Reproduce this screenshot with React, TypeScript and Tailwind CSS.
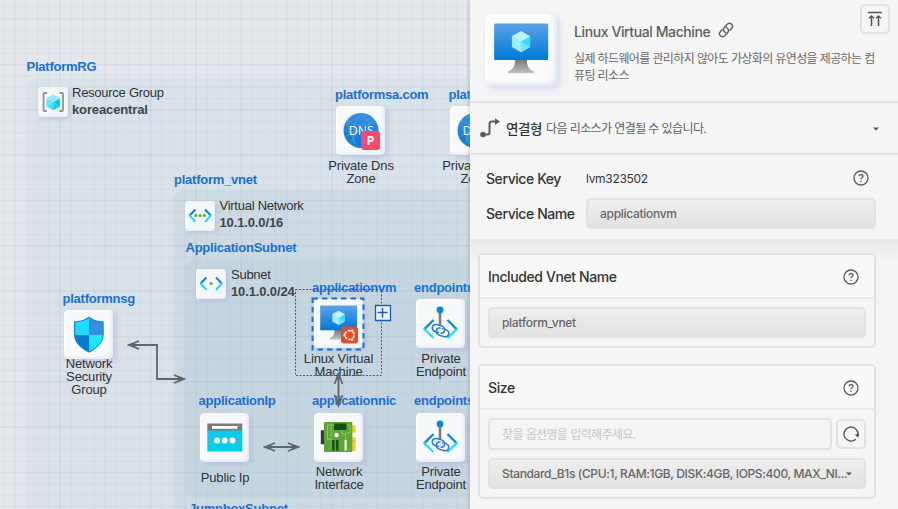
import type { ReactNode } from 'react';

const gridX = Array.from({ length: 43 }, (_, i) => 3.4 + i * 11.33);
const gridY = Array.from({ length: 46 }, (_, i) => -3.4 + i * 11.33);

function Grid() {
  return (
    <svg className="absolute inset-0" width="470" height="509" stroke="#7f93aa">
      {gridX.map((x, i) => (
        <path key={`x${i}`} d={`M${x} 0V509`} strokeWidth={i % 4 === 1 ? 1.6 : 1.3} opacity={i % 4 === 1 ? 0.1 : 0.055} />
      ))}
      {gridY.map((y, i) => (
        <path key={`y${i}`} d={`M0 ${y}H470`} strokeWidth={i % 4 === 2 ? 1.6 : 1.3} opacity={i % 4 === 2 ? 0.1 : 0.055} />
      ))}
    </svg>
  );
}

function DnsIcon() {
  return (
    <svg width="49" height="49" viewBox="0 0 49 49">
      <defs><linearGradient id="dns" x2="0" y2="1"><stop stopColor="#3b8fdf" /><stop offset="1" stopColor="#0877d1" /></linearGradient></defs>
      <circle cx="25" cy="24.5" r="17.5" fill="url(#dns)" />
      <g fill="none" stroke="#61adf0" strokeWidth=".8" opacity=".6">
        <path d="M11 14Q26 25 40 14M9 31Q24 19 41 31M25 7Q13 20 19 41M27 7Q40 23 29 41M11 14Q14 32 23 41M36 11Q24 16 15 38" />
      </g>
      <text x="12.8" y="29" fontSize="12.3" fill="white" className="font-['Open_Sans',sans-serif]">DNS</text>
      <rect x="25" y="25" width="19" height="19" rx="3" fill="#ff476b" />
      <text x="30.3" y="39" fontSize="13" fontWeight="700" fill="white" className="font-['Open_Sans',sans-serif]">P</text>
    </svg>
  );
}

function MonitorIcon({ size = 49, ubuntu = false }: { size?: number; ubuntu?: boolean }) {
  return (
    <svg width={size} height={size} viewBox="0 0 49 49">
      <defs>
        <linearGradient id="screen" x2="0" y2="1"><stop stopColor="#5ba1ec" /><stop offset="1" stopColor="#0079d5" /></linearGradient>
        <linearGradient id="stand" x2="0" y2="1"><stop stopColor="#777" /><stop offset="1" stopColor="#c2c2c2" /></linearGradient>
      </defs>
      <path d="M20.5 31h8c.1 5 1.5 7 4.8 8v1.4H15.7V39c3.3-1 4.7-3 4.8-8z" fill="url(#stand)" />
      <rect x="6.2" y="6.5" width="36.8" height="24.8" rx=".8" fill="url(#screen)" />
      <path d="M24.5 11.7l6.2 3.5v7.3l-6.2 3.5-6.2-3.5v-7.3z" fill="#9cedff" />
      <path d="M24.5 18.8l6.2-3.6v7.3z" fill="#31dcff" /><path d="M24.5 18.8v7.2l6.2-3.5z" fill="#6ae6ff" />
      <path d="M18.3 15.2l6.2-3.5 6.2 3.5-6.2 3.6z" fill="#bbf4ff" />
      {ubuntu && <g>
        <rect x="27" y="27.5" width="17" height="17" rx="3" fill="#e94b25" />
        <circle cx="35.5" cy="36" r="4.5" fill="none" stroke="white" strokeWidth="1.7" strokeDasharray="8 1.42" />
        <g fill="white" stroke="#e94b25" strokeWidth=".5"><circle cx="30.5" cy="36" r="1.5" /><circle cx="38" cy="31.5" r="1.5" /><circle cx="38" cy="40.5" r="1.5" /></g>
      </g>}
    </svg>
  );
}

function EndpointIcon() {
  return (
    <svg width="49" height="49" viewBox="0 0 49 49" fill="none">
      <path d="M24 13v13.5" stroke="#7b7b7b" strokeWidth="2.5" /><circle cx="24" cy="11" r="3.4" fill="#0c86d8" />
      <g strokeWidth="2.3"><path d="M17.5 21L8 30.6M31.5 21L41 30.6" stroke="#198ad7" /><path d="M8 29.8l9.5 9.2M41 29.8l-9.5 9.2" stroke="#24dffa" /></g>
      <g stroke="#277fd1" strokeWidth="1.5" strokeLinecap="round"><path d="M22.6 33.6l-3.1-.8c-5.2-2-3.7-8 1.2-7.3l4.7 1.4c5.2 2 3.7 7.6-.4 7.2" /><path d="M26.5 29.6l3 .8c5.2 2 3.6 8-1.2 7.3l-4.7-1.4c-5.2-2-3.7-7.6.4-7.2" /></g>
    </svg>
  );
}

function ShieldIcon() {
  return (
    <svg width="49" height="49" viewBox="0 0 49 49">
      <path d="M25 6.5c5 3.7 9 4.8 14.7 4.8v13.2c0 8-6 13.3-14.7 18.3-8.7-5-15-10.3-15-18.3V11.3C16 11.3 20 10.2 25 6.5z" fill="#1684d8" />
      <path d="M25 7.8V25H11.2V12.4c5.5-.1 9-1.2 13.8-4.6z" fill="#1dddf6" /><path d="M25 7.8V25h13.6V12.4C33.3 12.3 30 11.2 25 7.8z" fill="#388fdf" />
      <path d="M25 25h13.6c0 7.3-5.3 11.8-13.6 16.5z" fill="#22e5ff" /><path d="M25 25H11.2c0 7.3 5.5 11.8 13.8 16.5z" fill="#087dcd" />
    </svg>
  );
}

function PublicIpIcon() {
  return (
    <svg width="49" height="49" viewBox="0 0 49 49">
      <path d="M7.3 16.5h35v22h-35z" fill="#0acbed" /><path d="M7.3 10.5h35v7h-35z" fill="#7b7b7b" /><path d="M12 13h25.5v2.8H12z" fill="#fff" />
      <g fill="#f7feff"><circle cx="17" cy="27.5" r="3" /><circle cx="24.7" cy="27.5" r="3" /><circle cx="32.5" cy="27.5" r="3" /></g>
    </svg>
  );
}

function NicIcon() {
  return (
    <svg width="49" height="49" viewBox="0 0 49 49">
      <rect x="6.8" y="17.3" width="5" height="14" rx=".6" fill="#343a3e" /><path d="M37 12.2h4.5v7.5H37zM37 24.2h4.5V38H37z" fill="#fdc530" />
      <path d="M37 28h4.5" stroke="#e9a726" /><rect x="10" y="9" width="28.3" height="30" rx="1" fill="#5ba436" />
      <g fill="none" stroke="#8fca50" strokeWidth="1"><path d="M20 12h-6.5v14H18v10M17 14v10M28 16v5h3.5v13M33 12h3v8h-4" /></g>
      <rect x="20" y="10.5" width="12.5" height="6.5" fill="#174f1b" /><path d="M18 27h2.5v10.5H18zM22 27h2.5v10.5H22z" fill="#174f1b" /><path d="M30.5 27h2.3v10.5h-2.3z" fill="#e4ecdf" /><circle cx="22.5" cy="22" r="2.2" fill="white" />
    </svg>
  );
}

function GroupIcon() {
  return (
    <svg width="30" height="30" viewBox="0 0 30 30">
      <path d="M9 6H6.5a1 1 0 0 0-1 1v16a1 1 0 0 0 1 1H9M21.5 6H24a1 1 0 0 1 1 1v16a1 1 0 0 1-1 1h-2.5" fill="none" stroke="#929292" strokeWidth="1.8" />
      <path d="M15.3 7.3l6.9 4-6.9 4-6.9-4z" fill="#8cebff" /><path d="M8.4 11.3l6.9 4-6.9 3.9z" fill="#64e5fb" /><path d="M22.2 11.3l-6.9 4 6.9 4z" fill="#19c3de" /><path d="M15.3 15.3l-6.9 4 6.9 3.9z" fill="#35e2fa" /><path d="M15.3 15.3l6.9 4-6.9 3.9z" fill="#12cee9" />
    </svg>
  );
}

function NetworkIcon({ dots = 3 }: { dots?: number }) {
  return (
    <svg width="30" height="30" viewBox="0 0 30 30" fill="none">
      <g stroke="#0e82d4" strokeWidth="2"><path d="M10.4 8.5l-6 6.2M20 8.5l6 6.2" /></g><g stroke="#21daf5" strokeWidth="2"><path d="M4.4 14.2l6 6.5M26 14.2l-6 6.5" /></g>
      {dots === 3 && <g fill="#65ad42"><circle cx="10.8" cy="14.4" r="1.6" /><circle cx="19.4" cy="14.4" r="1.6" /></g>}<circle cx="15.1" cy="14.5" r="1.6" fill="#65ad42" />
    </svg>
  );
}

function NodeTile({ place, children }: { place: string; children: ReactNode }) {
  return <div className={`absolute h-[49px] w-[49px] rounded-[5px] bg-gradient-to-b from-[#f7f8f9] to-[#f7f9fb] shadow-[3px_3px_5px_#b3b8dd99,inset_-2px_-2px_3px_#e4edf3,inset_1px_1px_2px_white] ${place}`}>{children}</div>;
}

function SmallTile({ place, children }: { place: string; children: ReactNode }) {
  return <div className={`absolute h-[30px] w-[30px] rounded-[3px] bg-[#f5f6f7] shadow-[1.5px_2px_3px_#aeb4d688,inset_-1px_-1px_2px_#e6edf1] ${place}`}>{children}</div>;
}

function Name({ place, children }: { place: string; children: ReactNode }) {
  return <div className={`absolute whitespace-nowrap text-[13px] leading-[15px] font-bold tracking-[-0.24px] text-[#1a70d2] ${place}`}>{children}</div>;
}

function Caption({ place, children }: { place: string; children: ReactNode }) {
  return <div className={`absolute w-[90px] text-center text-[13px] leading-[13px] tracking-[-0.15px] text-[#303336] ${place}`}>{children}</div>;
}

function Detail({ place, title, value }: { place: string; title: string; value: string }) {
  return (
    <div className={`absolute whitespace-nowrap text-[13px] leading-[17px] tracking-[-0.26px] text-[#303336] ${place}`}>
      {title}<br /><b className="tracking-[-0.13px] text-[#414549]">{value}</b>
    </div>
  );
}

function Canvas() {
  return (
    <main className="relative h-full w-[470px] shrink-0 overflow-hidden bg-[#e4e7eb] font-['Liberation_Sans',Arial,sans-serif]">
      <div className="absolute top-[78px] left-[27px] h-[500px] w-[500px] rounded-[8px] bg-[#d8e2e8]" />
      <div className="absolute top-[190px] left-[174px] h-[400px] w-[400px] rounded-[8px] bg-[#cddae2]" />
      <div className="absolute top-[259px] left-[186px] h-[239px] w-[400px] rounded-[8px] bg-[#c6d6e0]" />
      <Grid />
      <Name place="left-[26.5px] top-[59px]">PlatformRG</Name>
      <Name place="left-[174px] top-[172px]">platform_vnet</Name>
      <Name place="left-[185.5px] top-[240px]">ApplicationSubnet</Name>
      <Name place="left-[189px] top-[501px]">JumpboxSubnet</Name>

      <SmallTile place="left-[37.5px] top-[87px]"><GroupIcon /></SmallTile>
      <Detail place="top-[84px] left-[72px]" title="Resource Group" value="koreacentral" />
      <SmallTile place="left-[185px] top-[201px]"><NetworkIcon /></SmallTile>
      <Detail place="top-[197px] left-[219.5px]" title="Virtual Network" value="10.1.0.0/16" />
      <SmallTile place="left-[196px] top-[269px]"><NetworkIcon dots={1} /></SmallTile>
      <Detail place="top-[266px] left-[231px]" title="Subnet" value="10.1.0.0/24" />

      <Name place="left-[335px] top-[87px]">platformsa.com</Name>
      <NodeTile place="left-[336px] top-[106px]"><DnsIcon /></NodeTile>
      <Caption place="left-[316px] top-[159px]">Private Dns<br />Zone</Caption>
      <Name place="left-[448.5px] top-[87px]">platformsa.com</Name>
      <NodeTile place="left-[450px] top-[106px]"><DnsIcon /></NodeTile>
      <Caption place="left-[430px] top-[159px]">Private Dns<br />Zone</Caption>

      <Name place="left-[62.5px] top-[291px]">platformnsg</Name>
      <NodeTile place="left-[64px] top-[310px]"><ShieldIcon /></NodeTile>
      <Caption place="left-[44px] top-[357px]">Network<br />Security<br />Group</Caption>

      <Name place="left-[312px] top-[280px]">applicationvm</Name>
      <NodeTile place="left-[313.5px] top-[299px]"><MonitorIcon ubuntu /></NodeTile>
      <Caption place="left-[293.5px] top-[352px]"><span className="whitespace-nowrap">Linux Virtual</span><br />Machine</Caption>
      <Name place="left-[414px] top-[280px]">endpointmysql</Name>
      <NodeTile place="left-[416px] top-[299px]"><EndpointIcon /></NodeTile>
      <Caption place="left-[396px] top-[352px]">Private<br />Endpoint</Caption>

      <Name place="left-[198.5px] top-[393px]">applicationIp</Name>
      <NodeTile place="left-[200px] top-[412.5px]"><PublicIpIcon /></NodeTile>
      <Caption place="left-[180px] top-[471px]">Public Ip</Caption>
      <Name place="left-[312px] top-[393px]">applicationnic</Name>
      <NodeTile place="left-[314px] top-[413px]"><NicIcon /></NodeTile>
      <Caption place="left-[294px] top-[465px]">Network<br />Interface</Caption>
      <Name place="left-[414px] top-[393px]">endpointstorage</Name>
      <NodeTile place="left-[416px] top-[413px]"><EndpointIcon /></NodeTile>
      <Caption place="left-[396px] top-[465px]">Private<br />Endpoint</Caption>

      <svg className="absolute inset-0" width="470" height="509" fill="none">
        <rect x="295.5" y="289.5" width="86" height="86" stroke="#4f5962" strokeDasharray="2 1.5" />
        <rect x="312.5" y="298.5" width="51" height="51" stroke="#1b6fce" strokeWidth="2" strokeDasharray="5.5 4" />
        <path d="M375.5 305.5h15v15h-15z" fill="#e9f0fc" stroke="#1c5cb9" strokeWidth="1.3" /><path d="M377.5 312.5h10M382.5 308v9.5" stroke="#1c5cb9" strokeWidth="1.5" />
        <g stroke="#636466" strokeWidth="1.8">
          <path d="M130 345h27v34h26M266 447h31M338.5 376v28" />
          <path d="M139 341l-10 4 10 4M174 375l10 4-10 4M275 443l-10 4 10 4M288 443l10 4-10 4M334.5 384l4-10 4 10M334.5 395l4 10 4-10" />
        </g>
        <g fill="#636466"><path d="M127 345l9-3-2 3 2 3zM186 379l-9-3 2 3-2 3zM263 447l9-3-2 3 2 3zM300 447l-9-3 2 3-2 3zM338.5 372l-3 9 3-2 3 2zM338.5 408l-3-9 3 2 3-2z" /></g>
      </svg>
    </main>
  );
}

function Help() {
  return (
    <svg width="16" height="16" viewBox="0 0 16 16" fill="none" stroke="#5c5c5c" strokeWidth="1.3"><circle cx="8" cy="8" r="7" /><path d="M6.1 6.3c0-2.5 3.9-2.2 3.8 0 0 1.4-1.9 1.4-1.9 3M8 10.7v1.4" strokeWidth="1.4" /></svg>
  );
}

function Caret() {
  return <svg className="shrink-0" width="6" height="4" viewBox="0 0 6 4"><path d="M0 .4h6L3 3.6z" fill="#555" /></svg>;
}

function Card({ title, children }: { title: string; children: ReactNode }) {
  return (
    <section className="rounded-[5px] border-2 border-[#e1e1e1] bg-[#f5f5f5]">
      <div className="flex h-[44px] items-center justify-between border-b-2 border-[#e8e8e8] bg-[#f8f8f8] pr-[15px] pl-2 text-[14px] font-medium tracking-[-0.4px]">{title}<span className="pt-0.5"><Help /></span></div>
      <div className="p-2">{children}</div>
    </section>
  );
}

const field = 'flex items-center rounded-[5px] border-2 border-[#e1e1e1] px-3 text-[12px] font-medium tracking-[-0.3px] text-[#666]';

function Inspector() {
  return (
    <aside className="relative flex h-full min-w-0 flex-1 flex-col bg-[#f5f5f5] font-[Inter,'Noto_Sans_CJK_KR',sans-serif] text-[#333] shadow-[-1px_0_3px_#778b9c55]">
      <header className="flex h-[103px] shrink-0 border-b-2 border-[#e1e1e1] pt-[14px] pl-[15px]">
        <div className="h-[72px] w-[72px] shrink-0 rounded-[7px] bg-[#fbfbfb] shadow-[3px_3px_6px_#c5bce58c,inset_-3px_-3px_5px_#deebf2,inset_2px_2px_3px_white]"><MonitorIcon size={72} /></div>
        <div className="ml-[17px] pt-[7px]">
          <div className="flex h-[20px] items-center text-[14px] tracking-[-0.4px] text-[#5e5e5e]"><h1 className="w-[137px] whitespace-nowrap font-medium">Linux Virtual Machine</h1>
            <svg className="mb-[3px] ml-[7px]" width="16" height="16" viewBox="0 0 16 16" fill="none" stroke="#5f5f5f" strokeWidth="1.45" strokeLinecap="round"><path d="M7.6 10.6C4.9 9.2 5 6.6 6.8 4.8l2.2-2.3c3.3-3 7.4 1 4.5 4.1l-1.5 1.6M8.4 5.4c2.7 1.4 2.6 4 .8 5.8L7 13.5c-3.3 3-7.4-1-4.5-4.1L4 7.8" /></svg>
          </div>
          <p className="mt-[9px] w-[306px] whitespace-nowrap text-[12px] leading-[17px] tracking-[-0.62px] text-[#686868]">실제 하드웨어를 관리하지 않아도 가상화의 유연성을 제공하는 컴<br />퓨팅 리소스</p>
        </div>
        <button className="absolute top-1 right-2 flex h-[30px] w-[30px] items-center justify-center rounded-[5px] border-2 border-[#e1e1e1]"><svg width="16" height="16" viewBox="0 0 16 16" fill="none" stroke="#555" strokeWidth="1.5"><path d="M1 1.5h14M4.5 15V5M2 7.2L4.5 5 7 7.2M11.5 15V5M9 7.2L11.5 5 14 7.2" /></svg></button>
      </header>
      <div className="flex h-[52px] shrink-0 items-center border-b-2 border-[#e1e1e1] pr-[19px] pl-[10px]">
        <svg width="20" height="20" viewBox="0 0 20 20" fill="none"><path d="M3 16.5h4.3q2.2 0 2.2-2V6q0-2.5 2.4-2.5H15" stroke="#5b5b5b" strokeWidth="2" /><circle cx="3" cy="16.5" r="2.8" fill="#5b5b5b" /><path d="M15 .2l5 3.3-5 3.6z" fill="#5b5b5b" /></svg>
        <b className="ml-[6px] pt-0.5 text-[13.5px] font-medium tracking-[-0.4px]">연결형</b><span className="ml-1 flex-1 pt-0.5 text-[12px] tracking-[-0.6px] text-[#606060]">다음 리소스가 연결될 수 있습니다.</span><span className="flex pt-0.5"><Caret /></span>
      </div>
      <div className="h-[84px] shrink-0 pt-[12px] pr-[22px] pl-4">
        <div className="flex h-[22px] items-center"><span className="w-[100px] text-[14px] font-medium tracking-[-0.42px]">Service Key</span><span className="flex-1 pt-0.5 text-[12px] tracking-[-0.3px]">lvm323502</span><div className="mr-[7px]"><Help /></div></div>
        <div className="mt-[9px] flex items-center"><span className="w-[100px] whitespace-nowrap text-[14px] font-medium tracking-[-0.42px]">Service Name</span><div className={`${field} h-[31px] flex-1 bg-gradient-to-b from-[#eeeeee] to-[#e2e2e2]`}>applicationvm</div></div>
      </div>
      <div className="flex flex-1 flex-col gap-4 bg-gradient-to-b from-[#e9e9e9] to-[#f5f5f5] to-[24px] pt-[14px] pr-[22px] pl-2">
        <Card title="Included Vnet Name"><div className={`${field} h-[31px] bg-gradient-to-b from-[#eeeeee] to-[#e2e2e2]`}>platform_vnet</div></Card>
        <Card title="Size">
          <div className="flex items-center gap-1"><div className={`${field} h-8 flex-1`}><span className="pt-0.5 font-normal tracking-[-0.6px] text-[#c6c6c6]">찾을 옵션명을 입력해주세요.</span></div><button className="flex h-[30px] w-[30px] items-center justify-center rounded-[5px] border-2 border-[#e1e1e1]"><svg width="16" height="16" viewBox="0 0 16 16" fill="none"><path d="M12.8 13.2A7 7 0 1 1 15 8v2" stroke="#555" strokeWidth="1.4" /><path d="M11.8 8.8l3.4 3 .8-4" fill="#555" /></svg></button></div>
          <div className={`${field} mt-2 h-[31px] bg-gradient-to-b from-[#eeeeee] to-[#e2e2e2]`}><span className="min-w-0 flex-1 whitespace-nowrap tracking-[-0.36px]">Standard_B1s (CPU:1, RAM:1GB, DISK:4GB, IOPS:400, MAX_NI...</span><Caret /></div>
        </Card>
      </div>
    </aside>
  );
}

export default function App() {
  return <div className="flex h-[509px] w-[898px] overflow-hidden"><Canvas /><Inspector /></div>;
}
